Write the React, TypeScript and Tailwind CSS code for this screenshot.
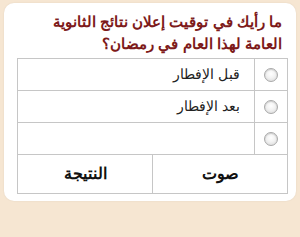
import React from "react";

function Radio() {
  return (
    <span className="inline-block w-[14px] h-[14px] rounded-full border border-[#a9a9a9] bg-[radial-gradient(circle_at_50%_40%,#ffffff_0%,#f2f2f2_45%,#d4d4d4_100%)] shadow-[inset_0_1px_1px_rgba(0,0,0,0.15)]" />
  );
}

export default function App() {
  const rows = ["قبل الإفطار", "بعد الإفطار", ""];
  return (
    <div className="w-[300px] h-[237px] bg-[#f6e6d2] pt-[3px] pl-[4px] pr-[4px]" dir="rtl" style={{ fontFamily: '"Liberation Sans", sans-serif' }}>
      <div className="bg-white rounded-[10px] h-[198px] pt-[8px] flex flex-col shadow-[0_0_2px_rgba(0,0,0,0.08)]">
        <div className="text-[#7d1a1a] font-bold text-[15px] leading-[22px] pr-[14px] text-right whitespace-nowrap">
          ما رأيك في توقيت إعلان نتائج الثانوية
          <br />
          العامة لهذا العام في رمضان؟
        </div>
        <div className="mt-[3px] mr-[8px] ml-[13px] border border-[#c6c6c6]">
          {rows.map((r, i) => (
            <div key={i} className="flex h-[32px] border-b border-[#c6c6c6]">
              <div className="w-[33px] border-l border-[#c6c6c6] flex items-center justify-center">
                <Radio />
              </div>
              <div className="flex-1 flex items-center pr-[14px] text-[14px] text-[#222]">{r}</div>
            </div>
          ))}
          <div className="flex h-[38px]">
            <div className="w-[135px] border-l border-[#c6c6c6] flex items-center justify-center font-bold text-[16px] text-[#111]">صوت</div>
            <div className="flex-1 flex items-center justify-center font-bold text-[16px] text-[#111]">النتيجة</div>
          </div>
        </div>
      </div>
    </div>
  );
}
